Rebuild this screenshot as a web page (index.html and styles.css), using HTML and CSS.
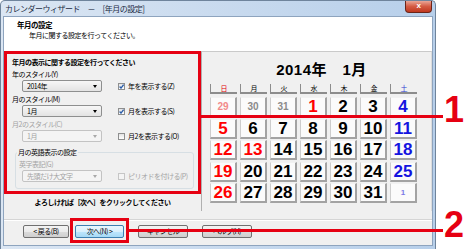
FILE: index.html
```html
<!DOCTYPE html>
<html>
<head lang="ja">
    <meta charset="UTF-8">
    <title>カレンダーウィザード</title>
    <link rel="stylesheet" href="styles.css">
</head>
<body>

    <div class="window">
        <div class="titlebar">
            <span class="title">カレンダーウィザード　－　[年月の設定]</span>
            <span class="close">x</span>
        </div>
        <div class="client">
            <div class="header">
                <div class="h-title">年月の設定</div>
                <div class="h-sub">年月に関する設定を行ってください。</div>
            </div>
            <div class="main">
                <div class="left">
                    <div class="form">
                        <div class="lead">年月の表示に関する設定を行ってください</div>
                        <div class="label">年のスタイル(Y)</div>
                        <div class="row">
                            <div class="combo">2014年</div>
                            <div class="check"><span class="box"><svg width="5" height="5" viewBox="0 0 5 5"><path d="M0.6 2.5 L2 4.1 L4.6 0.6" fill="none" stroke="#2a5ca8" stroke-width="1.3"/></svg></span>年を表示する(Z)</div>
                        </div>
                        <div class="label">月のスタイル(M)</div>
                        <div class="row">
                            <div class="combo">1月</div>
                            <div class="check"><span class="box"><svg width="5" height="5" viewBox="0 0 5 5"><path d="M0.6 2.5 L2 4.1 L4.6 0.6" fill="none" stroke="#2a5ca8" stroke-width="1.3"/></svg></span>月を表示する(S)</div>
                        </div>
                        <div class="label dis">月2のスタイル(C)</div>
                        <div class="row">
                            <div class="combo off">1月</div>
                            <div class="check"><span class="box"></span>月2を表示する(O)</div>
                        </div>
                        <fieldset class="group">
                            <legend>月の英語表示の設定</legend>
                            <div class="label dis">英字表記(G)</div>
                            <div class="row">
                                <div class="combo off">先頭だけ大文字</div>
                                <div class="check dis"><span class="box off"></span>ピリオドを付ける(P)</div>
                            </div>
                        </fieldset>
                    </div>
                    <div class="msg">よろしければ［次へ］をクリックしてください</div>
                </div>
                <div class="cal">
                    <div class="cal-title">2014年　1月</div>
                    <div class="week">
                        <div class="sun">日</div>
                        <div>月</div>
                        <div>火</div>
                        <div>水</div>
                        <div>木</div>
                        <div>金</div>
                        <div class="sat">土</div>
                    </div>
                    <div class="days">
                        <div class="other sun">29</div>
                        <div class="other">30</div>
                        <div class="other">31</div>
                        <div class="red">1</div>
                        <div>2</div>
                        <div>3</div>
                        <div class="blue">4</div>

                        <div class="red">5</div>
                        <div>6</div>
                        <div>7</div>
                        <div>8</div>
                        <div>9</div>
                        <div>10</div>
                        <div class="blue">11</div>

                        <div class="red">12</div>
                        <div class="red">13</div>
                        <div>14</div>
                        <div>15</div>
                        <div>16</div>
                        <div>17</div>
                        <div class="blue">18</div>

                        <div class="red">19</div>
                        <div>20</div>
                        <div>21</div>
                        <div>22</div>
                        <div>23</div>
                        <div>24</div>
                        <div class="blue">25</div>

                        <div class="red">26</div>
                        <div>27</div>
                        <div>28</div>
                        <div>29</div>
                        <div>30</div>
                        <div>31</div>
                        <div class="other sat">1</div>
                    </div>
                </div>
            </div>
            <div class="buttons">
                <div class="btn back">&lt; 戻る(B)</div>
                <div class="btn next">次へ(N) &gt;</div>
                <div class="btn cancel">キャンセル</div>
                <div class="btn help">ヘルプ(H)</div>
            </div>
        </div>
    </div>

    <!-- 説明用の赤い枠と番号 -->
    <div class="mark box1"></div>
    <div class="line line1"></div>
    <div class="num num1">1</div>
    <div class="mark box2"></div>
    <div class="line line2"></div>
    <div class="num num2">2</div>

</body>
</html>
```

FILE: styles.css
```css
* {
    padding: 0;
    margin: 0;
    box-sizing: border-box;
}
body {
    position: relative;
    width: 470px;
    height: 249px;
    overflow: hidden;
    background-color: #fff;
    font-family: "Noto Sans CJK JP", sans-serif;
    font-size: 7px;
    letter-spacing: -0.5px;
    color: #000;
}
.window {
    display: flex;
    flex-direction: column;
    width: 436px;
    height: 249px;
    padding: 0 3px 4px;
    border: 1px solid #6f849c;
    border-bottom: none;
    border-radius: 5px 5px 0 0;
    background: linear-gradient(to right, #dbe6f3, #b7cfea);
}
.titlebar {
    display: flex;
    justify-content: space-between;
    height: 16px;
}
.title {
    padding: 3px 0 0 1px;
    font-size: 8px;
    line-height: 10px;
    color: #1c2c44;
}
.close {
    width: 27px;
    height: 12px;
    border: 1px solid #6b2518;
    border-top: none;
    border-radius: 0 0 4px 4px;
    background: linear-gradient(#eaa697, #d45a42 50%, #c0381f);
    color: #fff;
    font: bold 8px/10px "Liberation Sans", sans-serif;
    text-align: center;
}
.client {
    display: flex;
    flex-direction: column;
    flex: 1;
    background-color: #f0f0f0;
    box-shadow: 0 0 0 1px #8ea4be;
}
.header {
    height: 34px;
    padding: 3px 0 0 13px;
    background-color: #fff;
    line-height: 10px;
}
.h-title {
    font-weight: bold;
    font-size: 7.5px;
}
.h-sub {
    padding-left: 12px;
}
.main {
    display: flex;
    height: 160px;
}
.left {
    display: flex;
    flex-direction: column;
    width: 197px;
}
.form {
    height: 142px;
    padding: 6px 0 0 8px;
}
.lead {
    font-weight: bold;
    line-height: 10px;
    margin-bottom: 1px;
}
.label {
    margin-top: 2px;
    line-height: 10px;
}
.dis {
    color: #a3a3a3;
}
.row {
    display: flex;
    align-items: center;
    height: 12px;
    margin-top: 1px;
}
.combo {
    position: relative;
    width: 80px;
    height: 12px;
    margin-left: 10px;
    padding-left: 4px;
    border: 1px solid #8e8f8f;
    border-radius: 2px;
    background: linear-gradient(#f7f7f7, #e3e3e3);
    line-height: 10px;
}
.combo:after {
    content: "";
    position: absolute;
    right: 4px;
    top: 4px;
    border-left: 2px solid transparent;
    border-right: 2px solid transparent;
    border-top: 3px solid #000;
}
.combo.off {
    border-color: #c3c3c3;
    background: #f4f4f4;
    color: #a3a3a3;
}
.combo.off:after {
    border-top-color: #a8a8a8;
}
.check {
    display: flex;
    align-items: center;
    gap: 3px;
    margin-left: 16px;
    line-height: 10px;
}
.box {
    display: flex;
    align-items: center;
    justify-content: center;
    width: 7px;
    height: 7px;
    border: 1px solid #8e8f8f;
    background: linear-gradient(#e4e4e4, #fff);
}
.box.off {
    border-color: #c6c6c6;
    background: #f4f4f4;
}
.group {
    width: 179px;
    margin: 5px 0 0 3px;
    padding: 0 0 6px 1px;
    border: 1px solid #d7dfe4;
    border-radius: 3px;
}
.group legend {
    padding: 0 1px;
    line-height: 10px;
}
.group .label {
    padding-left: 2px;
}
.group .combo {
    margin-left: 5px;
}
.msg {
    margin-top: 4px;
    font-weight: bold;
    line-height: 10px;
    text-align: center;
}
.cal {
    flex: 1;
    padding: 10px 0 0 8px;
    border-top: 1px solid #cacaca;
    border-left: 1px solid #b0b0b0;
    border-right: 1px solid #dcdcdc;
}
.cal-title {
    width: 207px;
    padding-left: 16px;
    font: bold 15px/16px "Liberation Sans", "Noto Sans CJK JP", sans-serif;
    letter-spacing: 0.5px;
    text-align: center;
}
.week,
.days {
    display: grid;
    grid-template-columns: repeat(7, 27px);
    column-gap: 3px;
}
.week {
    margin-top: 6px;
}
.week div {
    height: 10px;
    border-left: 1px solid #8c8c8c;
    border-bottom: 2px solid #8c8c8c;
    line-height: 8px;
    text-align: center;
    letter-spacing: 0;
}
.days {
    grid-auto-rows: 20px;
    row-gap: 1.5px;
    margin-top: 3px;
}
.days div {
    border-top: 1px solid #f2f2f2;
    border-left: 1px solid #cdcdcd;
    border-right: 2px solid #a3a3a3;
    border-bottom: 2px solid #a3a3a3;
    background-color: #fbfbfb;
    font: bold 17px/17px "Liberation Sans", sans-serif;
    letter-spacing: 0;
    text-align: center;
}
.week .sun {
    color: #e00000;
}
.week .sat {
    color: #2a3cd0;
}
.days .red {
    color: #ff0000;
}
.days .blue {
    color: #1414e0;
}
.days .other {
    font-size: 10px;
    color: #8a8a8a;
}
.days .other.sun {
    color: #f28a8a;
}
.days .other.sat {
    font-size: 8px;
    color: #7a7ae6;
}
.buttons {
    display: flex;
    flex: 1;
    margin-top: 8px;
    padding: 5px 0 0 19px;
    border-top: 1px solid #d5d5d5;
    box-shadow: inset 0 1px #fff;
}
.btn {
    height: 13px;
    border: 1px solid #707070;
    border-radius: 2px;
    background: linear-gradient(#f3f3f3, #ebebeb 50%, #dcdcdc 50%, #cfcfcf);
    line-height: 11px;
    text-align: center;
}
.back {
    width: 46px;
}
.next {
    width: 49px;
    margin-left: 6px;
    border-color: #3c7fb1;
    background: linear-gradient(#eaf6fd, #d9f0fc 50%, #bee6fd 50%, #a7d9f5);
}
.cancel {
    width: 50px;
    margin-left: 14px;
}
.help {
    width: 50px;
    margin-left: 14px;
}
.mark {
    position: absolute;
    border: 3px solid #e60012;
}
.box1 {
    left: 4px;
    top: 51px;
    width: 197px;
    height: 143px;
}
.box2 {
    left: 70px;
    top: 218px;
    width: 59px;
    height: 25px;
}
.line {
    position: absolute;
    height: 3px;
    background-color: #e60012;
}
.line1 {
    left: 200px;
    top: 115px;
    width: 243px;
}
.line2 {
    left: 128px;
    top: 229px;
    width: 315px;
}
.num {
    position: absolute;
    left: 444px;
    font: bold 36px/36px "Liberation Sans", sans-serif;
    color: #e60012;
}
.num1 {
    top: 92px;
}
.num2 {
    top: 207px;
}
```
